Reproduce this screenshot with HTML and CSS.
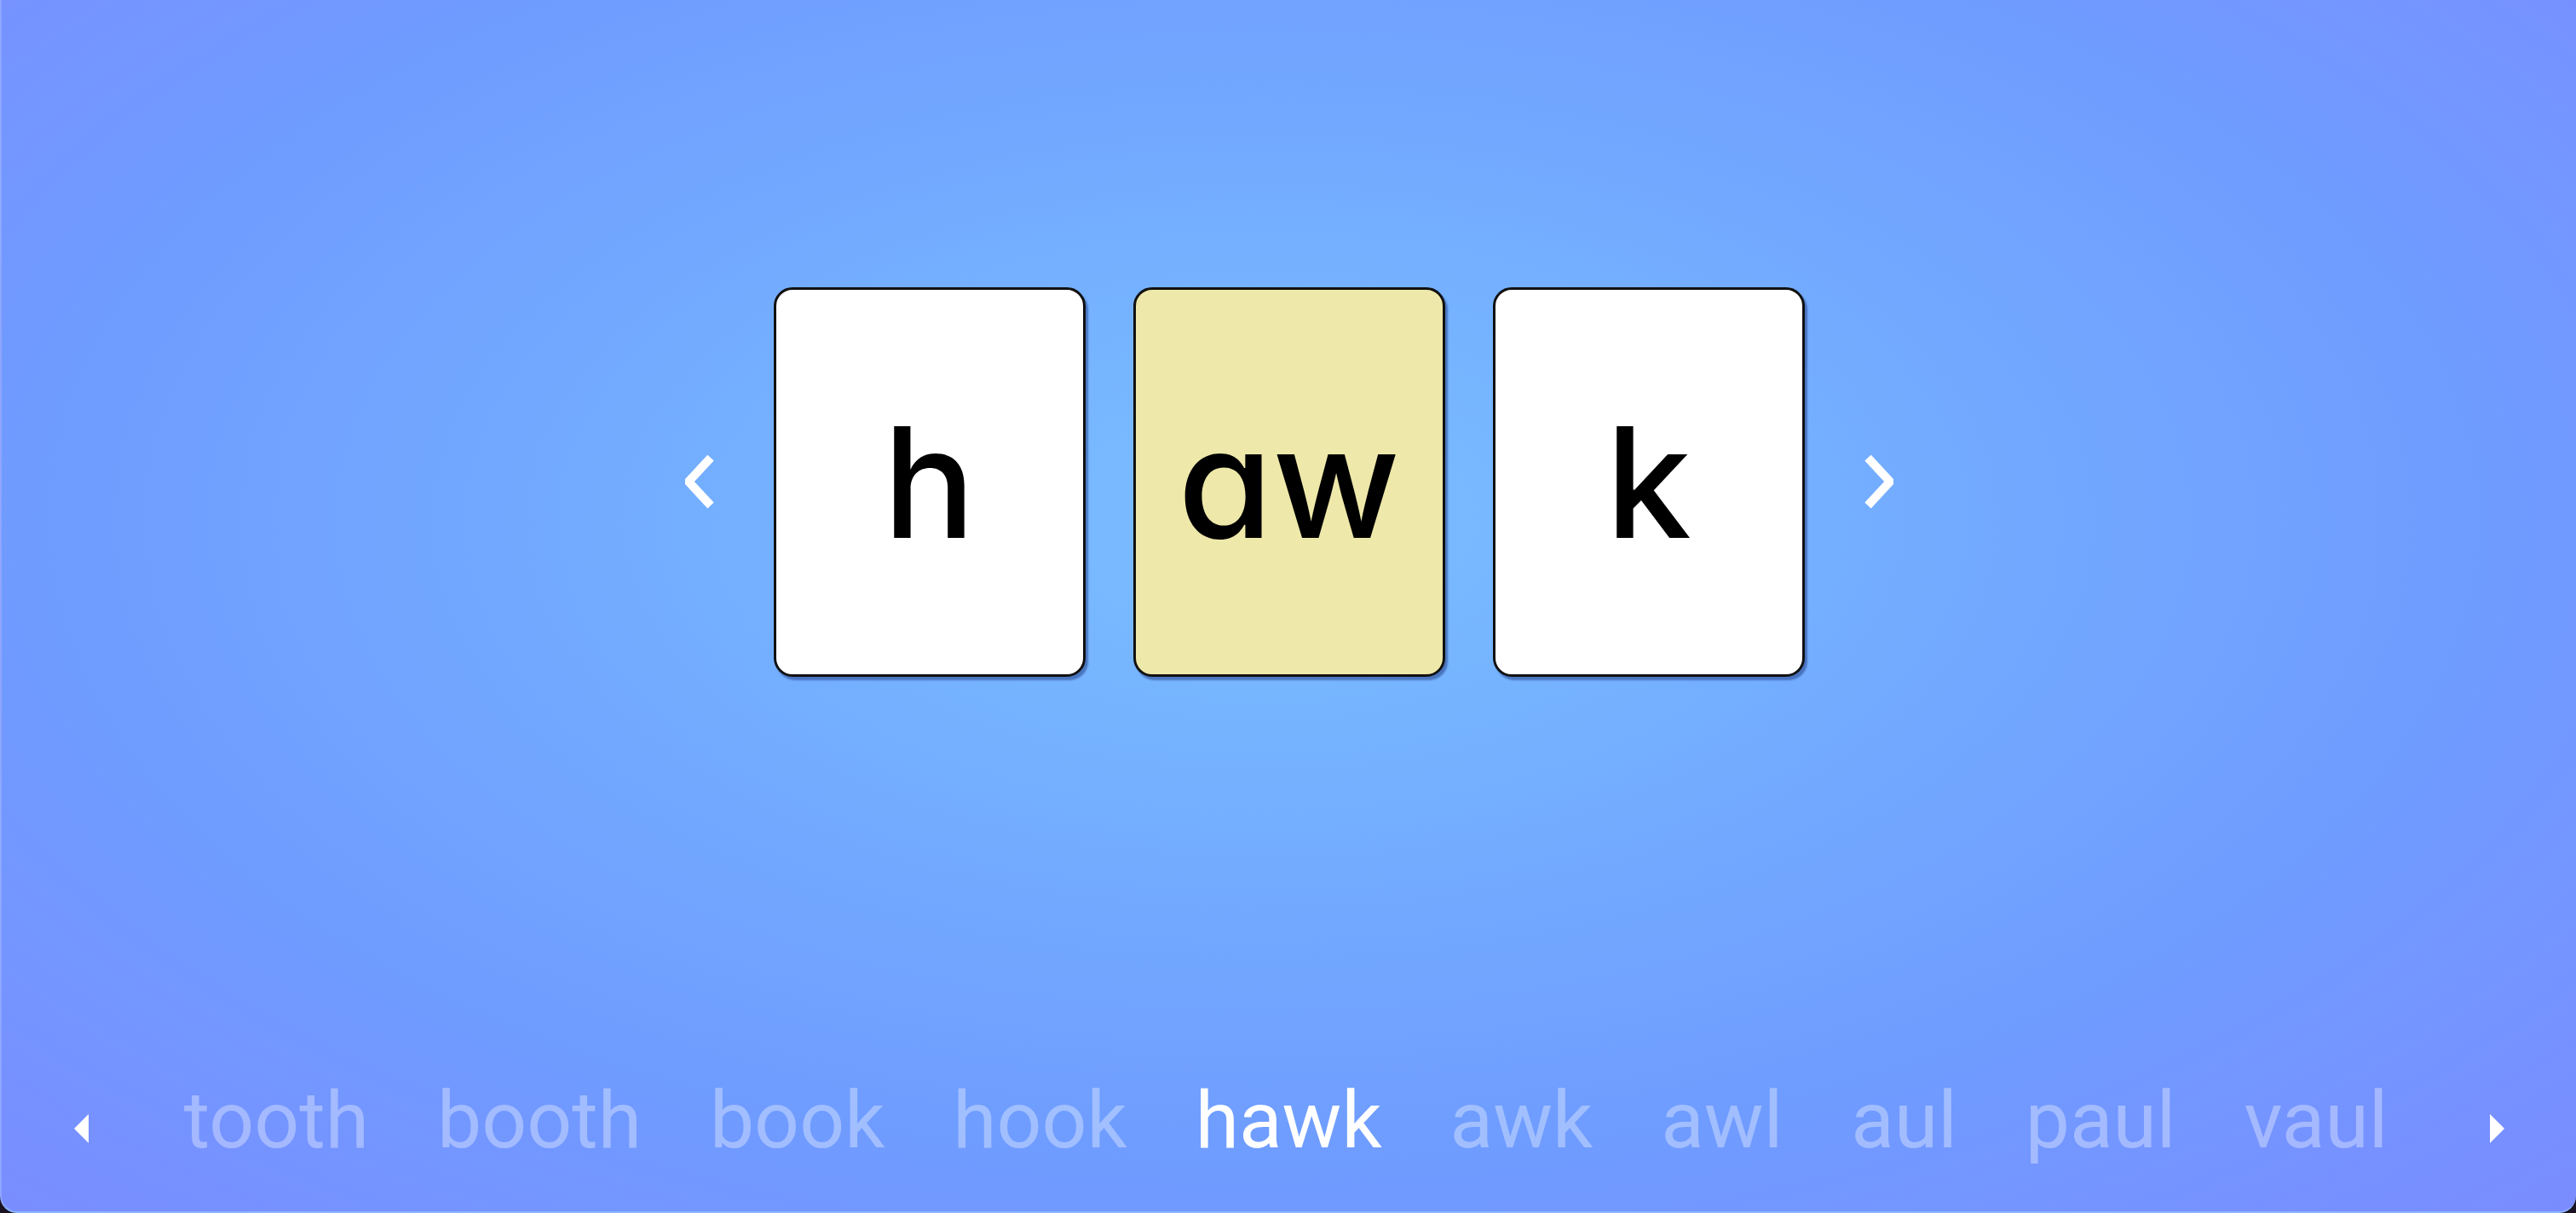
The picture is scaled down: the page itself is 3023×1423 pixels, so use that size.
FILE: index.html
```html
<!DOCTYPE html>
<html lang="en">
<head>
<meta charset="utf-8">
<title>Word Builder</title>
<link rel="stylesheet" href="styles.css">
</head>
<body>
<div class="stage">
  <section class="deck">
    <button class="chev" aria-label="Previous">
      <svg width="34" height="64" viewBox="0 0 34 64"><polyline points="30,3 4,31 30,59" fill="none" stroke="#fff" stroke-width="10"/></svg>
    </button>
    <div class="cards">
      <div class="card">h</div>
      <div class="card card-vowel">aw</div>
      <div class="card">k</div>
    </div>
    <button class="chev" aria-label="Next">
      <svg width="34" height="64" viewBox="0 0 34 64"><polyline points="4,3 30,31 4,59" fill="none" stroke="#fff" stroke-width="10"/></svg>
    </button>
  </section>
  <nav class="bar">
    <span class="tri tri-left"></span>
    <div class="words">
      <span class="word">tooth</span>
      <span class="word">booth</span>
      <span class="word">book</span>
      <span class="word">hook</span>
      <span class="word word-active">hawk</span>
      <span class="word">awk</span>
      <span class="word">awl</span>
      <span class="word">aul</span>
      <span class="word">paul</span>
      <span class="word">vaul</span>
    </div>
    <span class="tri tri-right"></span>
  </nav>
</div>
</body>
</html>
```

FILE: styles.css
```css
html, body {
  margin: 0;
  padding: 0;
  background: #1b1322;
}

.stage {
  box-sizing: border-box;
  width: 3023px;
  height: 1423px;
  display: flex;
  flex-direction: column;
  border-left: 2px solid #8ea6ff;
  border-bottom: 2px solid #8db4ff;
  border-radius: 0 0 20px 20px;
  background: radial-gradient(ellipse farthest-corner at 49% 43%, #7abeff 0%, #73acff 35%, #6f9cff 65%, #7a8cff 100%);
  overflow: hidden;
}

.deck {
  padding-top: 337px;
  display: flex;
  justify-content: center;
  align-items: center;
  gap: 70px;
}

.chev {
  background: none;
  border: 0;
  padding: 0;
  display: flex;
  cursor: pointer;
}

.cards {
  display: flex;
  gap: 56px;
}

.card {
  box-sizing: border-box;
  width: 366px;
  height: 457px;
  background: #ffffff;
  border: 3px solid #111111;
  border-radius: 22px;
  box-shadow: 3px 4px 2px rgba(20, 40, 110, 0.45);
  display: flex;
  align-items: center;
  justify-content: center;
  font-family: Inter, "Noto Sans", sans-serif;
  font-feature-settings: "cv11" 1;
  font-size: 180px;
  font-weight: 500;
  color: #000;
}

.card-vowel {
  background: #eee8aa;
}

.bar {
  margin-top: auto;
  padding: 0 84px 52px 85px;
  display: flex;
  align-items: center;
}

.tri {
  width: 0;
  height: 0;
  border-top: 17px solid transparent;
  border-bottom: 17px solid transparent;
  margin-top: 18px;
}

.tri-left {
  border-right: 17px solid #ffffff;
}

.tri-right {
  border-left: 17px solid #ffffff;
}

.words {
  flex: 1;
  display: flex;
  justify-content: center;
  gap: 80px;
  padding-right: 8px;
}

.word {
  font-family: Roboto, "Liberation Sans", sans-serif;
  font-size: 93px;
  color: rgba(255, 255, 255, 0.35);
}

.word-active {
  color: #ffffff;
}
```
